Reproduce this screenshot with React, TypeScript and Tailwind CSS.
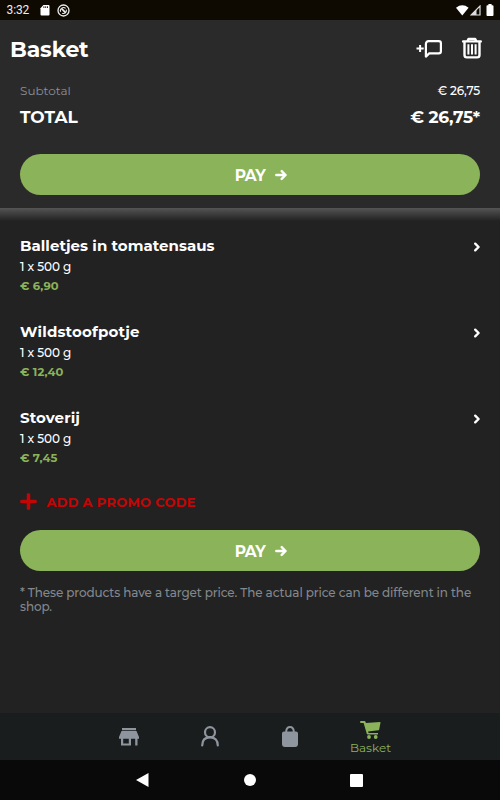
import React from 'react';

const products = [
  { name: 'Balletjes in tomatensaus', price: '€ 6,90', nameClass: 'tracking-[0.03px]' },
  { name: 'Wildstoofpotje', price: '€ 12,40', nameClass: 'tracking-[0.17px]' },
  { name: 'Stoverij', price: '€ 7,45', nameClass: 'tracking-[0.1px]' },
];

function StatusBar() {
  return (
    <div className="flex h-5 shrink-0 items-center bg-[#0e0a02] pr-[6px] pl-[6.5px] text-[#eeeeee]">
      <span className="font-['Roboto',sans-serif] text-[12px] leading-5 tracking-[-0.1px]">3:32</span>
      <svg className="ml-[10.5px]" width="10" height="11" viewBox="0 0 10 11">
        <path fill="#fff" d="M3.4 0H8.6Q9.5 0 9.5 1V9.5Q9.5 10.5 8.5 10.5H1.5Q.5 10.5 .5 9.5V3.2Z" />
        <path stroke="#0e0a02" strokeWidth=".9" d="M3.9 1.3V3M5.7 1.3V3M7.5 1.3V3" />
      </svg>
      <svg className="ml-[7px]" width="13" height="13" viewBox="0 0 13 13" fill="none" stroke="#eee">
        <circle cx="6.5" cy="6.5" r="5.5" strokeWidth="1.3" />
        <path d="M3.6 7.8A3.1 3.1 0 0 1 8.6 4.4M9.3 5.6A3.1 3.1 0 0 1 5.2 9.3" strokeWidth="1.1" />
        <path d="M4.6 4.6L8.8 8.8" strokeWidth="1.7" />
      </svg>
      <svg className="ml-auto" width="13" height="11" viewBox="0 0 13 11">
        <path fill="#fff" d="M0 2.8Q6.3-2.1 12.6 2.8L6.3 10.5Z" />
      </svg>
      <svg className="ml-[1px]" width="11" height="11" viewBox="0 0 11 11">
        <path fill="none" stroke="#ddd" strokeWidth="1.2" d="M10 1V10H1Z" />
        <path fill="#ddd" d="M1 10L6.5 4.8V10Z" />
      </svg>
      <svg className="ml-[5px]" width="8" height="12" viewBox="0 0 8 12">
        <path fill="#fff" d="M2.4 0H5.6V1.2H6.6Q7.5 1.2 7.5 2.2V11Q7.5 12 6.6 12H1.4Q.5 12 .5 11V2.2Q.5 1.2 1.4 1.2H2.4Z" />
      </svg>
    </div>
  );
}

function PayButton() {
  return (
    <button className="flex h-[41px] w-full items-center justify-center rounded-full bg-[#8bb35a] pl-[22px] text-white">
      <span className="mt-[2px] text-[15.5px] leading-5 font-bold tracking-[-0.5px]">PAY</span>
      <svg className="ml-[10px]" width="12" height="12" viewBox="0 0 12 12" fill="none" stroke="currentColor" strokeWidth="2.4" strokeLinecap="round" strokeLinejoin="round">
        <path d="M1.3 6H10.2M6.7 2.1L10.6 6L6.7 9.9" />
      </svg>
    </button>
  );
}

export default function App() {
  return (
    <div className="flex h-[800px] w-[500px] flex-col overflow-hidden bg-[#222222] font-['Montserrat','Inter',sans-serif] text-white">
      <StatusBar />
      <header className="h-[188px] shrink-0 bg-[#2a2a2a]">
        <div className="flex h-[58px] items-center pr-[17px] pl-[10px]">
          <h1 className="mt-px text-[22px] leading-7 font-bold tracking-[-0.15px]">Basket</h1>
          <svg className="ml-auto" width="27" height="20" viewBox="0 0 27 20" fill="none" stroke="#fff" strokeWidth="2">
            <path d="M.5 9.5H7.7M4.1 6V13" />
            <path strokeWidth="2.2" strokeLinejoin="round" d="M9.9 17.6V5Q9.9 2.2 12.6 2.2H22.8Q24.9 2.2 24.9 4.2V12.3Q24.9 14.4 22.8 14.4H13.2Z" />
          </svg>
          <svg className="mt-[-2px] ml-[18px]" width="22" height="22" viewBox="0 0 22 22" fill="none" stroke="#fff" strokeWidth="2.4" strokeLinejoin="round" strokeLinecap="round">
            <path d="M2.1 4.4H19.8M6.5 4L7.6 1.9H14.1L15.2 4M3.5 4.5V18Q3.5 20.4 5.9 20.4H16.1Q18.5 20.4 18.5 18V4.5" />
            <path strokeWidth="2" strokeLinecap="butt" d="M7.4 7.2V17.5M11 7.2V17.5M14.6 7.2V17.5" />
          </svg>
        </div>
        <div className="px-5">
          <div className="flex h-[26px] items-center justify-between text-[12px]">
            <span className="text-[#8a9097]">Subtotal</span>
            <span className="font-medium tracking-[-0.15px]">€ 26,75</span>
          </div>
          <div className="flex h-[27px] items-center justify-between text-[17px] font-bold">
            <span>TOTAL</span>
            <span className="tracking-[-0.2px]">€ 26,75*</span>
          </div>
          <div className="pt-[23px]">
            <PayButton />
          </div>
        </div>
      </header>
      <div className="h-[13px] shrink-0 bg-linear-to-b from-[#555555] to-[#222222]" />
      <main className="flex-1 px-5 pt-[14px]">
        {products.map((p) => (
          <section key={p.name} className="h-[86px]">
            <div className="flex h-[21px] items-center justify-between">
              <h2 className={'text-[15px] leading-5 font-bold ' + p.nameClass}>{p.name}</h2>
              <svg className="mt-[2px] mr-[-1px]" width="8" height="10" viewBox="0 0 8 10" fill="none" stroke="#fff" strokeWidth="2.4" strokeLinecap="round" strokeLinejoin="round">
                <path d="M2.2 1.7L5.6 5L2.2 8.3" />
              </svg>
            </div>
            <p className="h-[21px] text-[12px] leading-[21px] font-medium tracking-[-0.08px]">1 x 500 g</p>
            <p className="h-[19px] text-[11.5px] leading-[19px] font-bold tracking-[0.1px] text-[#8bb35a]">{p.price}</p>
          </section>
        ))}
        <div className="mt-[-1px] flex h-[18px] items-center text-[#c40505]">
          <svg width="17" height="17" viewBox="0 0 17 17" fill="none" stroke="currentColor" strokeWidth="3.6" strokeLinecap="round">
            <path d="M1.8 8.5H15.2M8.5 1.8V15.2" />
          </svg>
          <span className="mt-px ml-[9.5px] text-[13px] leading-[18px] font-bold tracking-[0.25px]">ADD A PROMO CODE</span>
        </div>
        <div className="pt-[20px]">
          <PayButton />
        </div>
        <p className="pt-[15px] text-[12px] leading-[14px] font-medium tracking-[-0.12px] whitespace-nowrap text-[#83888e]">
          * These products have a target price. The actual price can be different in the
          <br />
          shop.
        </p>
      </main>
      <nav className="flex h-[47px] shrink-0 justify-center bg-[#191d1e] pr-[2px] text-[#8f959f]">
        <div className="flex w-[80px] items-center justify-center">
          <svg width="20" height="18" viewBox="0 0 20 18" fill="currentColor">
            <path d="M3 0H17V2.2H3ZM2.5 3H17.5L20 9V10.7H18.5V17.5H16.2V10.7H12V17.5H2V10.7H0V9ZM4.2 10.7V15.5H9.8V10.7Z" fillRule="evenodd" />
          </svg>
        </div>
        <div className="flex w-[81px] items-center justify-center pl-px">
          <svg width="20" height="21" viewBox="0 0 20 21" fill="none" stroke="currentColor" strokeWidth="2.2" strokeLinecap="round">
            <circle cx="10" cy="6.2" r="5" />
            <path d="M2.2 19.5Q2.2 11.4 10 11.4T17.8 19.5" />
          </svg>
        </div>
        <div className="flex w-[80px] items-center justify-center">
          <svg width="16" height="21" viewBox="0 0 16 21" fill="currentColor">
            <path fillRule="evenodd" d="M3.2 5.5Q3.5 0 8 0T12.8 5.5H14Q16 5.5 16 7.5V18Q16 21 13 21H3Q0 21 0 18V7.5Q0 5.5 2 5.5ZM5.2 5.5H10.8Q10.6 2 8 2T5.2 5.5Z" />
          </svg>
        </div>
        <div className="flex w-[80px] flex-col items-center pt-[8px] pl-[2px] text-[#8bb35a]">
          <svg width="21" height="18" viewBox="0 0 21 18" fill="currentColor">
            <path d="M1 0H4.6Q5.2 0 5.4.6L5.9 1.9L20 .9Q20.6.9 20.5 1.6L19.2 8.4Q19 9.2 18.2 9.3L8.1 10.5L8.5 12H18V13.6H7.9Q7 13.6 6.8 12.8L3.6 2H1Q0 2 0 1T1 0Z" />
            <circle cx="9" cy="16" r="1.9" />
            <circle cx="15.7" cy="16" r="1.9" />
          </svg>
          <span className="text-[12px] leading-[17px]">Basket</span>
        </div>
      </nav>
      <div className="flex h-10 shrink-0 items-center bg-[#090909] pl-[136px]">
        <svg width="13" height="14" viewBox="0 0 13 14"><path fill="#fff" d="M12.5 0V14L0 7Z" /></svg>
        <div className="ml-[95px] size-3 rounded-full bg-white" />
        <div className="ml-[94px] size-[13px] rounded-[1px] bg-white" />
      </div>
    </div>
  );
}
